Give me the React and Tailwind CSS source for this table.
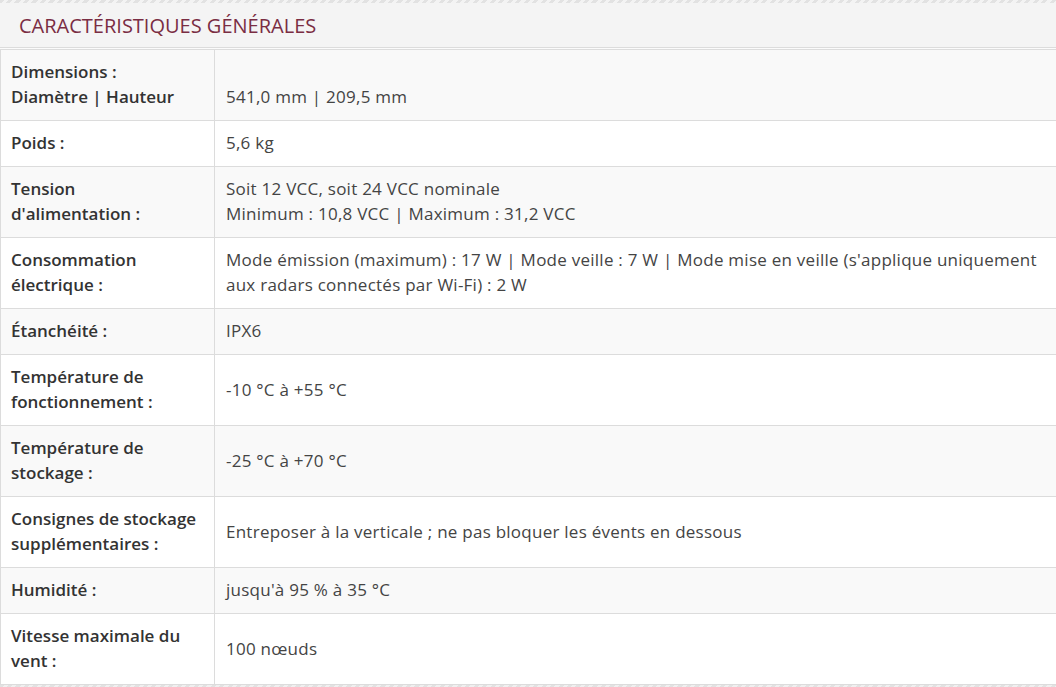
import React from "react";

const rows = [
  { label: ["Dimensions :", "Diamètre | Hauteur"], value: ["\u00a0", "541,0 mm | 209,5 mm"] },
  { label: ["Poids :"], value: ["5,6 kg"] },
  { label: ["Tension", "d'alimentation :"], value: ["Soit 12 VCC, soit 24 VCC nominale", "Minimum : 10,8 VCC | Maximum : 31,2 VCC"] },
  {
    label: ["Consommation", "électrique :"],
    value: [
      "Mode émission (maximum) : 17 W | Mode veille : 7 W | Mode mise en veille (s'applique uniquement",
      "aux radars connectés par Wi-Fi) : 2 W",
    ],
  },
  { label: ["Étanchéité :"], value: ["IPX6"] },
  { label: ["Température de", "fonctionnement :"], value: ["-10 °C à +55 °C"] },
  { label: ["Température de", "stockage :"], value: ["-25 °C à +70 °C"] },
  { label: ["Consignes de stockage", "supplémentaires :"], value: ["Entreposer à la verticale ; ne pas bloquer les évents en dessous"] },
  { label: ["Humidité :"], value: ["jusqu'à 95 % à 35 °C"] },
  { label: ["Vitesse maximale du", "vent :"], value: ["100 nœuds"] },
];

function Lines({ lines }) {
  return lines.map((l, i) => (
    <div key={i} className="whitespace-nowrap">
      {l}
    </div>
  ));
}

export default function App() {
  return (
    <div className="w-[1056px] h-[687px] overflow-hidden bg-white font-['Open_Sans',sans-serif]">
      <div className="h-[3px] bg-[repeating-linear-gradient(135deg,#e2e2e2_0_3px,#f3f3f3_3px_6px)]" />
      <div className="h-[45px] bg-[#f4f4f4] border-b border-[#dcdcdc] flex items-center pt-[2px] px-[19px]">
        <h2 className="text-[20px] text-[#7a2d43] uppercase">Caractéristiques générales</h2>
      </div>
      <div className="h-px bg-[#fbfbfb]" />

      <div className="border-l border-[#dcdcdc]">
        {rows.map((row, i) => (
          <div
            key={i}
            className={`flex border-t border-[#dcdcdc] text-[17px] leading-[25px] ${
              i % 2 === 0 ? "bg-[#f9f9f9]" : "bg-white"
            }`}
          >
            <div className="w-[213px] shrink-0 pt-[9px] pb-[11px] pl-[10px] font-semibold text-[#333] flex flex-col justify-center">
              <Lines lines={row.label} />
            </div>
            <div className="flex-1 border-l border-[#dcdcdc] pt-[9px] pb-[11px] pl-[11px] tracking-[0.25px] text-[#444] flex flex-col justify-center">
              <Lines lines={row.value} />
            </div>
          </div>
        ))}
        <div className="border-t border-[#dcdcdc]" />
      </div>
      <div className="h-[3px] bg-[repeating-linear-gradient(135deg,#e2e2e2_0_3px,#f0f0f0_3px_6px)]" />
    </div>
  );
}
